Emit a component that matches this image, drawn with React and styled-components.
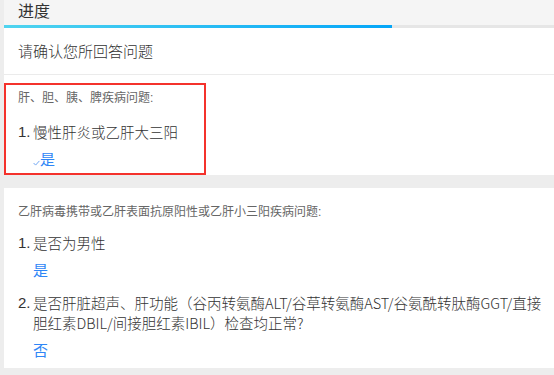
import styled, { createGlobalStyle } from 'styled-components';

const GlobalStyle = createGlobalStyle`
    body {
        margin: 0;
        background: #ededed;
        font-family: "Liberation Sans", "Noto Sans CJK SC", sans-serif;
        color: #333;
    }
`

const sections = [
    {
        title: '肝、胆、胰、脾疾病问题:',
        highlight: true,
        items: [
            { q: '慢性肝炎或乙肝大三阳', a: '是', checked: true },
        ],
    },
    {
        title: '乙肝病毒携带或乙肝表面抗原阳性或乙肝小三阳疾病问题:',
        items: [
            { q: '是否为男性', a: '是' },
            { q: '是否肝脏超声、肝功能（谷丙转氨酶ALT/谷草转氨酶AST/谷氨酰转肽酶GGT/直接胆红素DBIL/间接胆红素IBIL）检查均正常?', a: '否' },
        ],
    },
]

function Check(){
    return (
        <CheckMark width="7" height="6" viewBox="0 0 7 6">
            <path d="M0.6 3 L2.6 5.1 L6.4 0.9" fill="none" stroke="#74a9f3" strokeWidth="1" />
        </CheckMark>
    )
}

function Section({title, items, highlight}){
    return (
        <SectionBox $highlight={highlight}>
            <Inner $highlight={highlight}>
                <SubTitle>{title}</SubTitle>
                {items.map((item, i) => (
                    <div key={i}>
                        <Question $highlight={highlight}>
                            <Num>{i + 1}.</Num>
                            <QText>{item.q}</QText>
                        </Question>
                        <Answer>
                            {item.checked && <Check />}
                            {item.a}
                        </Answer>
                    </div>
                ))}
            </Inner>
        </SectionBox>
    )
}

export default function App(){
    const progress = 388 / 550

    return (
        <Page>
            <GlobalStyle />
            <Header>进度</Header>
            <Track>
                <Fill style={{ width: `${progress * 100}%` }} />
            </Track>
            <Title>请确认您所回答问题</Title>
            {sections.map((s, i) => <Section key={i} {...s} />)}
        </Page>
    )
}

const Page = styled.div`
    padding-left: 4px;
    min-height: 375px;
    box-sizing: border-box;
`

const Header = styled.div`
    height: 25px;
    line-height: 24px;
    padding-left: 14px;
    background: #f5f5f5;
    font-size: 16px;
    color: #333;
`

const Track = styled.div`
    height: 3px;
    background: #e6e6e6;
`

const Fill = styled.div`
    height: 100%;
    background: linear-gradient(90deg, #4fd4ef, #05a6f8);
`

const Title = styled.div`
    background: #fff;
    padding: 12px 14px;
    line-height: 22px;
    font-family: "Noto Sans CJK SC", sans-serif;
    font-size: 15px;
    font-weight: 300;
    color: #333;
    border-bottom: 1px solid #ebebeb;
`

const SectionBox = styled.div`
    background: #fff;
    padding: ${p => p.$highlight ? '8px 0 0' : '15px 8px 7px 14px'};
    margin-bottom: 13px;
`

const Inner = styled.div`
    ${p => p.$highlight && `
        width: 202px;
        box-sizing: border-box;
        border: 2px solid #f4322c;
        padding: 4px 12px 3px;
    `}
`

const SubTitle = styled.div`
    font-size: 12px;
    line-height: 18px;
    color: #666;
`

const Question = styled.div`
    display: flex;
    margin-top: ${p => p.$highlight ? '15px' : '12px'};
    font-size: 15px;
    line-height: 20px;
    color: #333;
`

const Num = styled.span`
    flex: none;
    width: 15px;
`

const QText = styled.span`
    flex: 1;
    font-family: "Noto Sans CJK SC", "Liberation Sans", sans-serif;
    font-size: 14.5px;
    font-weight: 300;
`

const Answer = styled.div`
    display: flex;
    align-items: flex-end;
    margin-top: 8px;
    padding-left: 15px;
    font-size: 15px;
    line-height: 20px;
    color: #2f86f6;
`

const CheckMark = styled.svg`
    margin: 0 0 4px 0;
`
